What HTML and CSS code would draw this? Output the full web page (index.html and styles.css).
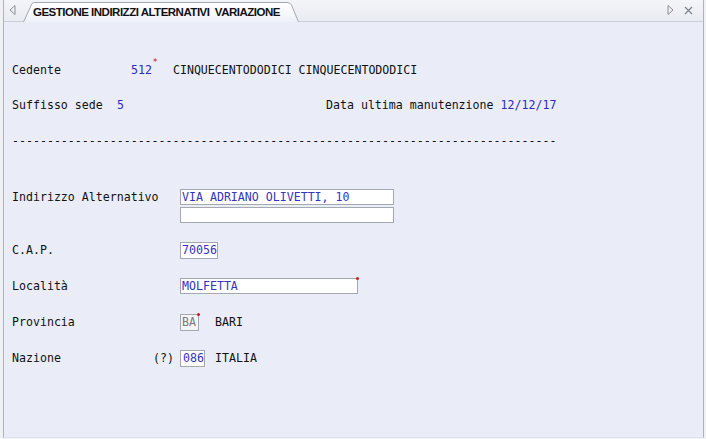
FILE: index.html
```html
<!DOCTYPE html>
<html>
<head>
<meta charset="utf-8">
<link rel="stylesheet" href="styles.css">
</head>
<body>
<div class="window">
  <div class="tabstrip">
    <span class="nav nav-left"><svg width="7" height="10" viewBox="0 0 7 10"><path d="M6 0.5 L1 5 L6 9.5 Z" fill="none" stroke="#8a8f98" stroke-width="1"/></svg></span>
    <div class="tab">
      <svg class="tab-shape" width="276" height="21" viewBox="0 0 276 21"><defs><linearGradient id="tg" x1="0" y1="0" x2="0" y2="1"><stop offset="0" stop-color="#ffffff"/><stop offset="1" stop-color="#eef1f8"/></linearGradient></defs><path d="M0.5 21 L9 2.5 Q10 1.5 12 1.5 L264 1.5 Q267 1.5 268.5 4 L275.5 21" fill="url(#tg)" stroke="#a3a9b3" stroke-width="1"/></svg>
      <span class="tab-title">GESTIONE INDIRIZZI ALTERNATIVI&nbsp; VARIAZIONE</span>
    </div>
    <span class="spacer"></span>
    <span class="nav nav-right"><svg width="7" height="10" viewBox="0 0 7 10"><path d="M1 0.5 L6 5 L1 9.5 Z" fill="none" stroke="#8a8f98" stroke-width="1"/></svg></span>
    <span class="nav nav-close"><svg width="9" height="9" viewBox="0 0 9 9"><path d="M1 1 L8 8 M8 1 L1 8" stroke="#7d828b" stroke-width="1.2"/></svg></span>
  </div>
  <div class="content">
    <div class="row r1">
      <span class="lbl w17">Cedente</span>
      <span class="val">512<span class="req">*</span></span>
      <span class="txt pad-desc">CINQUECENTODODICI CINQUECENTODODICI</span>
    </div>
    <div class="row r2">
      <span class="lbl w15">Suffisso sede</span>
      <span class="val w30">5</span>
      <span class="lbl">Data ultima manutenzione</span>
      <span class="val pad1">12/12/17</span>
    </div>
    <div class="row r3">
      <span class="lbl">------------------------------------------------------------------------------</span>
    </div>
    <div class="row r4">
      <span class="lbl w24 lbl-top">Indirizzo Alternativo</span>
      <div class="stack">
        <span class="field f-wide">VIA ADRIANO OLIVETTI, 10</span>
        <span class="field f-wide"></span>
      </div>
    </div>
    <div class="row r5">
      <span class="lbl w24">C.A.P.</span>
      <span class="field f-cap">70056</span>
    </div>
    <div class="row r6">
      <span class="lbl w24">Località</span>
      <span class="field f-loc">MOLFETTA<span class="dot"></span></span>
    </div>
    <div class="row r7">
      <span class="lbl w24">Provincia</span>
      <span class="field f-prov">BA<span class="dot"></span></span>
      <span class="txt desc2">BARI</span>
    </div>
    <div class="row r8">
      <span class="lbl w20">Nazione</span>
      <span class="lbl w4q">(?)</span>
      <span class="field f-naz">086</span>
      <span class="txt desc3">ITALIA</span>
    </div>
  </div>
</div>
</body>
</html>
```
FILE: styles.css
```css
html, body {
  margin: 0;
  padding: 0;
  background: #f0f1f4;
}
.window {
  width: 699px;
  height: 437px;
  margin-left: 3px;
  border-left: 1px solid #aeb2ba;
  border-right: 1px solid #aeb2ba;
  border-bottom: 1px solid #dfe3ec;
  background: #eaedf7;
  display: flex;
  flex-direction: column;
}
.tabstrip {
  height: 22px;
  display: flex;
  align-items: flex-end;
  background: linear-gradient(#f4f5f8, #e8ebf1);
  border-bottom: 1px solid #c9ced8;
  box-sizing: border-box;
}
.nav {
  display: flex;
  align-items: center;
  height: 22px;
}
.nav-left { width: 14px; padding-left: 5px; }
.nav-right { width: 10px; }
.nav-close { width: 19px; padding-left: 7px; }
.spacer { flex: 1; }
.tab {
  position: relative;
  width: 276px;
  height: 21px;
  margin-bottom: -1px;
  display: flex;
  align-items: center;
}
.tab-shape {
  position: absolute;
  left: 0;
  top: 0;
}
.tab-title {
  position: relative;
  padding-left: 10px;
  padding-top: 1px;
  font-family: "Liberation Sans", Arial, sans-serif;
  font-weight: bold;
  font-size: 11.5px;
  letter-spacing: -0.5px;
  color: #111;
  white-space: nowrap;
}
.content {
  flex: 1;
  display: flex;
  flex-direction: column;
  padding-left: 8px;
  font-family: "DejaVu Sans Mono", monospace;
  font-size: 11.6px;
  color: #111;
}
.lbl, .txt, .val { white-space: pre; }
.row {
  display: flex;
  align-items: center;
  height: 18px;
}
.r1 { margin-top: 39px; }
.r2 { margin-top: 17px; }
.r3 { margin-top: 18px; }
.r4 { margin-top: 39px; height: auto; align-items: flex-start; }
.r5 { margin-top: 18px; }
.r6 { margin-top: 18px; }
.r7 { margin-top: 18px; }
.r8 { margin-top: 18px; }
.lbl-top { line-height: 16px; }
.w17 { width: 119px; }
.w15 { width: 105px; }
.w24 { width: 168px; }
.w20 { width: 141px; }
.w4q { width: 27px; }
.w30 { width: 209px; }
.val { color: #2b2bbf; position: relative; }
.pad1 { margin-left: 7px; }
.pad-desc { margin-left: 21px; }
.req {
  position: absolute;
  top: -6px;
  right: -6px;
  color: #d01010;
  font-size: 9px;
}
.stack {
  display: flex;
  flex-direction: column;
  gap: 2px;
}
.field {
  position: relative;
  box-sizing: border-box;
  height: 17px;
  line-height: 15px;
  padding-left: 1px;
  border: 1px solid #a4a8b0;
  background: #ffffff;
  color: #3434c4;
  white-space: pre;
}
.f-wide { width: 214px; height: 16px; line-height: 14px; }
.f-cap { width: 38px; }
.f-loc { width: 178px; height: 16px; line-height: 14px; }
.f-prov { width: 19px; color: #7a7a7a; background: #f4f5f8; }
.f-naz { width: 25px; padding-left: 2px; }
.dot {
  position: absolute;
  top: -2px;
  right: -2px;
  width: 3px;
  height: 3px;
  background: #d01818;
  border-radius: 50%;
}
.desc2 { margin-left: 16px; }
.desc3 { margin-left: 10px; }
```
